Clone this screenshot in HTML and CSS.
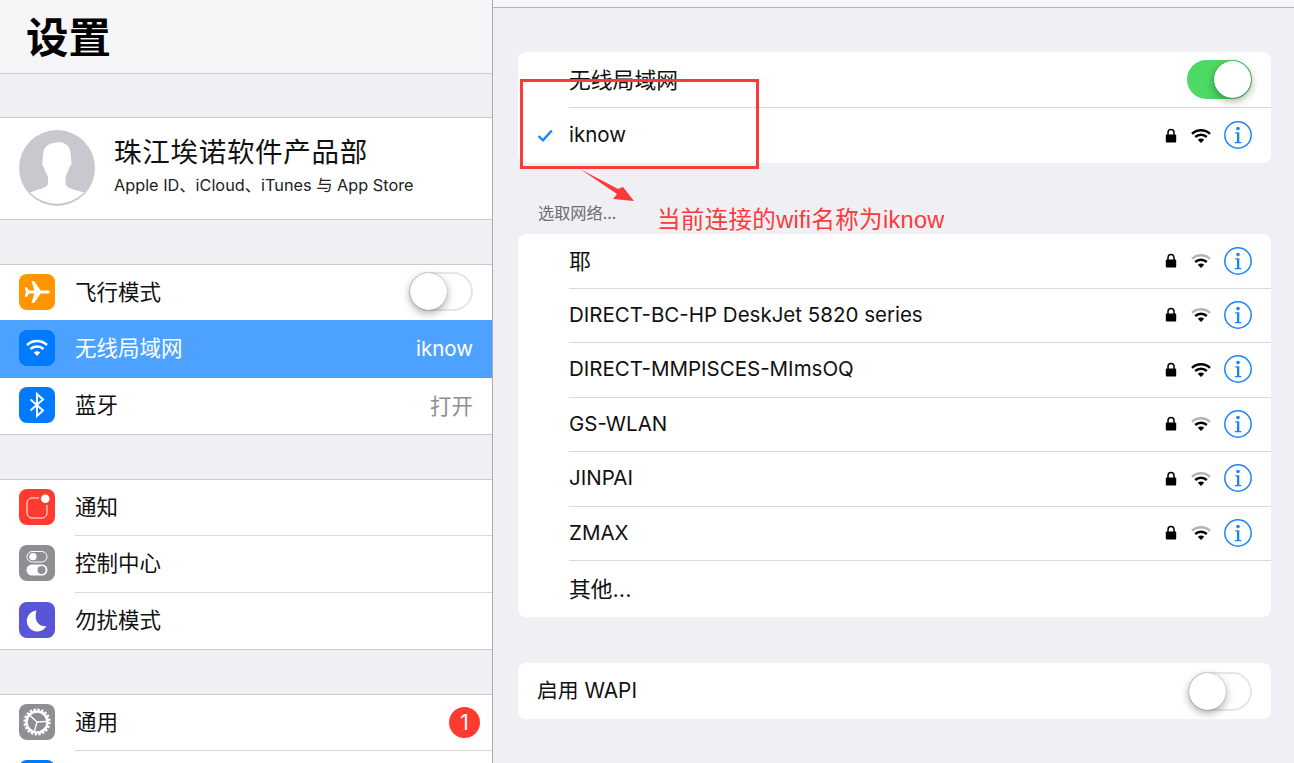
FILE: index.html
```html
<!DOCTYPE html>
<html lang="zh-CN">
<head>
<meta charset="utf-8">
<title>设置</title>
<link rel="stylesheet" href="styles.css">
</head>
<body>
<svg class="defs" width="0" height="0" aria-hidden="true">
  <defs>
    <symbol id="lock" viewBox="0 0 12 15">
      <path d="M3 7V4.600a3 3 0 0 1 6 0V7" fill="none" stroke="#000" stroke-width="1.500"/>
      <rect x="0.800" y="6.400" width="10.400" height="8" rx="1" fill="#000"/>
    </symbol>
    <symbol id="wifi-full" viewBox="0 0 20 15">
      <path d="M1 5.800a13 13 0 0 1 18 0" fill="none" stroke="#000" stroke-width="2.500"/>
      <path d="M4.200 9a8.400 8.400 0 0 1 11.600 0" fill="none" stroke="#000" stroke-width="2.500"/>
      <path d="M6.800 11.800a4.400 4.400 0 0 1 6.400 0L10 15Z" fill="#000"/>
    </symbol>
    <symbol id="wifi-weak" viewBox="0 0 20 15">
      <path d="M1 5.800a13 13 0 0 1 18 0" fill="none" stroke="#b4b4b4" stroke-width="2.500"/>
      <path d="M4.200 9a8.400 8.400 0 0 1 11.600 0" fill="none" stroke="#000" stroke-width="2.500"/>
      <path d="M6.800 11.800a4.400 4.400 0 0 1 6.400 0L10 15Z" fill="#000"/>
    </symbol>
    <symbol id="info" viewBox="0 0 28 28">
      <circle cx="14" cy="14" r="13.200" fill="none" stroke="#1a84ff" stroke-width="1.500"/>
      <circle cx="14" cy="7.600" r="1.800" fill="#1a84ff"/>
      <path d="M11.200 11.200h4.100v9.800h2v1.200h-6.400V21h2.100v-8.600h-1.800Z" fill="#1a84ff"/>
    </symbol>
  </defs>
</svg>

<div class="app">
  <aside class="side">
    <header class="side-head"><h1 class="side-title">设置</h1></header>

    <section class="group profile">
      <svg class="avatar" viewBox="0 0 76 76">
        <circle cx="38" cy="38" r="38" fill="#c8c8cd"/>
        <path d="M38.500 12.500c-9.500 0-14.500 5-14.500 13 0 3-.8 5.500-.8 8.500 0 2 1.300 2.500 1.800 3.500.8 3 2 6 4 9v7c-.5 3-4 4.500-8 5.500l-10 3.500a38 38 0 0 0 54 0L54.500 59.500c-4-1.500-8-3-8-6.500v-7c2-3 3.200-6 4-9 .4-1.500 2-1.500 2-3.500 0-3-.8-5.500-.8-8.500 0-8-4.200-13-13.200-13Z" fill="#fff"/>
      </svg>
      <div class="profile-text">
        <div class="profile-name">珠江埃诺软件产品部</div>
        <div class="profile-sub">Apple ID、iCloud、iTunes 与 App Store</div>
      </div>
    </section>

    <section class="group">
      <div class="item item-short">
        <span class="tile tile-orange">
          <svg viewBox="0 0 36 36" width="36" height="36"><path d="M31 18c0-1-1.500-1.600-3-1.600h-6.400L15.200 7h-2.800l3 9.400H10L7.800 13.300H5.600l1.400 4.700-1.400 4.700h2.200L10 19.600h5.400l-3 9.400h2.800l6.400-9.400H28c1.500 0 3-.6 3-1.600Z" fill="#fff"/></svg>
        </span>
        <span class="item-label">飞行模式</span>
        <span class="switch"><span class="knob"></span></span>
      </div>
      <div class="item item-active">
        <span class="tile tile-blue">
          <svg viewBox="0 0 36 36" width="36" height="36"><path d="M8 15a14.500 14.500 0 0 1 20 0M11.500 19a9.500 9.500 0 0 1 13 0" fill="none" stroke="#fff" stroke-width="2.600"/><path d="M14.800 22.600a5 5 0 0 1 6.400 0L18 26Z" fill="#fff"/></svg>
        </span>
        <span class="item-label">无线局域网</span>
        <span class="item-value">iknow</span>
      </div>
      <div class="item">
        <span class="tile tile-blue">
          <svg viewBox="0 0 36 36" width="36" height="36"><path d="M11.500 12.500 24 23.500 18 29V7l6 5.500-12.500 11" fill="none" stroke="#fff" stroke-width="2"/></svg>
        </span>
        <span class="item-label">蓝牙</span>
        <span class="item-value item-value-gray">打开</span>
      </div>
    </section>

    <section class="group">
      <div class="item">
        <span class="tile tile-red">
          <svg viewBox="0 0 36 36" width="36" height="36"><path d="M20 9h-7a5 5 0 0 0-5 5v10a5 5 0 0 0 5 5h10a5 5 0 0 0 5-5v-8" fill="none" stroke="#fff" stroke-width="1"/><circle cx="26.300" cy="9.700" r="4.300" fill="#fff"/></svg>
        </span>
        <span class="item-label">通知</span>
      </div>
      <div class="item">
        <span class="tile tile-gray">
          <svg viewBox="0 0 36 36" width="36" height="36"><rect x="8" y="6.500" width="20" height="10.500" rx="5.250" fill="none" stroke="#fff" stroke-width="1"/><circle cx="14" cy="11.700" r="3.600" fill="#fff"/><rect x="7.500" y="19.500" width="21" height="11" rx="5.500" fill="#fff"/><circle cx="22.500" cy="25" r="4" fill="#8e8e93"/></svg>
        </span>
        <span class="item-label">控制中心</span>
      </div>
      <div class="item">
        <span class="tile tile-indigo">
          <svg viewBox="0 0 36 36" width="36" height="36"><path d="M17.500 8.500a10.500 10.500 0 1 0 10 15.500c-6 1.500-13.500-4-10-15.500Z" fill="#fff"/></svg>
        </span>
        <span class="item-label">勿扰模式</span>
      </div>
    </section>

    <section class="group">
      <div class="item">
        <span class="tile tile-gray">
          <svg viewBox="0 0 36 36" width="36" height="36"><circle cx="18" cy="18" r="10.500" fill="none" stroke="#fff" stroke-width="2.500"/><circle cx="18" cy="18" r="12.300" fill="none" stroke="#fff" stroke-width="2.600" stroke-dasharray="2.300 1.560"/><path d="M18 18 11 11.500M18 18l9.500-.5M18 18l-2.500 9" fill="none" stroke="#fff" stroke-width="1.300"/></svg>
        </span>
        <span class="item-label">通用</span>
        <span class="badge">1</span>
      </div>
      <div class="item">
        <span class="tile tile-blue"></span>
      </div>
    </section>
  </aside>

  <main class="main">
    <div class="main-top"></div>
    <div class="main-body">
      <section class="card">
        <div class="net net-head">
          <span class="net-check"></span>
          <span class="net-name net-cjk">无线局域网</span>
          <span class="switch switch-on"><span class="knob"></span></span>
        </div>
        <div class="net net-current">
          <span class="net-check">
            <svg viewBox="0 0 16 13" width="16" height="13"><path d="M1.500 7 6 11.300 14.800 1.500" fill="none" stroke="#1a84ff" stroke-width="2.400"/></svg>
          </span>
          <span class="net-name">iknow</span>
          <svg class="i-lock"><use href="#lock"/></svg>
          <svg class="i-wifi"><use href="#wifi-full"/></svg>
          <svg class="i-info"><use href="#info"/></svg>
        </div>
      </section>

      <div class="card-caption">选取网络...</div>

      <section class="card">
        <div class="net net-first"><span class="net-check"></span><span class="net-name net-cjk">耶</span><svg class="i-lock"><use href="#lock"/></svg><svg class="i-wifi"><use href="#wifi-weak"/></svg><svg class="i-info"><use href="#info"/></svg></div>
        <div class="net"><span class="net-check"></span><span class="net-name">DIRECT-BC-HP DeskJet 5820 series</span><svg class="i-lock"><use href="#lock"/></svg><svg class="i-wifi"><use href="#wifi-weak"/></svg><svg class="i-info"><use href="#info"/></svg></div>
        <div class="net"><span class="net-check"></span><span class="net-name">DIRECT-MMPISCES-MImsOQ</span><svg class="i-lock"><use href="#lock"/></svg><svg class="i-wifi"><use href="#wifi-full"/></svg><svg class="i-info"><use href="#info"/></svg></div>
        <div class="net"><span class="net-check"></span><span class="net-name">GS-WLAN</span><svg class="i-lock"><use href="#lock"/></svg><svg class="i-wifi"><use href="#wifi-weak"/></svg><svg class="i-info"><use href="#info"/></svg></div>
        <div class="net"><span class="net-check"></span><span class="net-name">JINPAI</span><svg class="i-lock"><use href="#lock"/></svg><svg class="i-wifi"><use href="#wifi-weak"/></svg><svg class="i-info"><use href="#info"/></svg></div>
        <div class="net"><span class="net-check"></span><span class="net-name">ZMAX</span><svg class="i-lock"><use href="#lock"/></svg><svg class="i-wifi"><use href="#wifi-weak"/></svg><svg class="i-info"><use href="#info"/></svg></div>
        <div class="net net-last"><span class="net-check"></span><span class="net-name net-cjk">其他...</span></div>
      </section>

      <section class="card card-wapi">
        <div class="net net-wapi">
          <span class="net-name net-wapi-name">启用 WAPI</span>
          <span class="switch"><span class="knob"></span></span>
        </div>
      </section>
    </div>
  </main>

  <div class="note-box"></div>
  <svg class="note-arrow" viewBox="0 0 60 36" width="60" height="36"><polygon points="2,1 40,21 45,19 56,33 35,31 39,26" fill="#fc3a3a"/></svg>
  <div class="note-text">当前连接的wifi名称为iknow</div>
</div>
</body>
</html>
```
FILE: styles.css
```css
* { box-sizing: border-box; }
html, body { margin: 0; padding: 0; height: 100%; overflow: hidden; }
body {
  background: #efeff4;
  color: #000;
  font-family: Inter, "Liberation Sans", "Noto Sans CJK SC", sans-serif;
}
.defs { position: absolute; }
.app { position: relative; display: flex; width: 1294px; height: 763px; overflow: hidden; }

.side { width: 493px; flex: none; height: 763px; border-right: 1px solid #a9a9ae; overflow: hidden; }
.side-head { height: 74px; background: #f6f6f8; border-bottom: 1px solid #c9c9ce; display: flex; align-items: center; padding-left: 26px; }
.side-title { margin: 0; font-size: 42.500px; line-height: 1; font-weight: 700; font-family: "Noto Sans CJK SC", sans-serif; position: relative; top: -1px; }

.group { background: #fff; border-top: 1px solid #c9c9ce; border-bottom: 1px solid #c9c9ce; margin-top: 44px; }
.side-head + .group { margin-top: 43px; }

.profile { height: 103px; display: flex; align-items: center; padding-left: 19px; gap: 20px; }
.avatar { width: 76px; height: 76px; flex: none; position: relative; top: -1px; }
.profile-text { display: flex; flex-direction: column; gap: 8px; position: relative; top: -5px; }
.profile-name { font-size: 27.500px; line-height: 34px; letter-spacing: .72px; font-family: "Noto Sans CJK SC", sans-serif; color: #111; margin-left: -1px; }
.profile-sub { font-size: 16.300px; line-height: 20px; color: #222; margin-left: -1px; }

.item { position: relative; height: 56.333px; display: flex; align-items: center; padding: 0 19px 2px; }
.item + .item::before { content: ""; position: absolute; left: 75px; right: 0; top: -1px; height: 1px; background: #d8d8dc; }
.item-short { height: 55px; }
.item-active { background: #4ea2ff; color: #fff; height: 58px; }
.item-active + .item { height: 56px; }
.item-active::before, .item-active + .item::before { display: none; }
.tile { width: 36px; height: 36px; border-radius: 8px; flex: none; display: block; overflow: hidden; }
.tile-orange { background: #ff9500; }
.tile-blue { background: #007aff; }
.tile-red { background: #ff3b30; }
.tile-gray { background: #8e8e93; }
.tile-indigo { background: #5856d6; }
.tile svg { display: block; }
.item-label { margin-left: 20px; margin-bottom: 2px; flex: 1; font-size: 21.500px; line-height: 28px; font-family: "Noto Sans CJK SC", sans-serif; color: #111; }
.item-active .item-label { color: #fff; }
.item-value { margin-top: 2px; font-size: 20.500px; line-height: 28px; color: #fff; }
.item-value-gray { margin-top: 0; color: #8e8e93; font-size: 21.500px; font-family: "Noto Sans CJK SC", sans-serif; }
.badge { width: 31px; height: 31px; border-radius: 50%; background: #ff3b30; color: #fff; font-size: 21px; line-height: 31px; text-align: center; margin-right: -7px; }

.switch { position: relative; width: 64px; height: 39px; flex: none; border-radius: 20px; background: #fff; border: 2px solid #e6e6e6; display: block; }
.knob { position: absolute; left: -1px; top: -1px; width: 37px; height: 37px; border-radius: 50%; background: #fff; box-shadow: 0 3px 8px rgba(0, 0, 0, .35), 0 0 1px rgba(0, 0, 0, .4); }
.switch-on { width: 65px; background: #4cd964; border-color: #4cd964; }
.switch-on .knob { left: auto; right: -1px; }

.main { flex: 1; min-width: 0; }
.main-top { height: 8px; background: #f6f6f8; border-bottom: 1px solid #b4b4b8; }
.main-body { padding: 44px 23px 0 25px; }
.card { background: #fff; border-radius: 8px; overflow: hidden; }
.card-caption { height: 71px; padding: 38px 0 0 20px; font-size: 16.200px; line-height: 22px; color: #6d6d72; font-family: "Noto Sans CJK SC", sans-serif; }
.card-wapi { margin-top: 46px; }

.net { position: relative; height: 54.500px; display: flex; align-items: center; padding-right: 19px; }
.net + .net::before { content: ""; position: absolute; left: 51px; right: 0; top: 0; height: 1px; background: #d8d8dc; }
.net-first { height: 53.600px; }
.net-head { height: 55px; }
.net-current { height: 56px; }
.net-current::before { background: #ececef; }
.net-last { height: 57px; }
.net-wapi { height: 56px; padding-left: 19px; }
.net-check { width: 51px; flex: none; padding-left: 19px; display: flex; align-items: center; }
.net-name { flex: 1; font-size: 20.500px; line-height: 28px; color: #111; font-family: Inter, "Noto Sans CJK SC", sans-serif; }
.net-cjk { font-size: 21.800px; }
.net-wapi-name { font-size: 20.800px; }
.i-lock { width: 12px; height: 15px; flex: none; }
.i-wifi { width: 20px; height: 15px; flex: none; margin-left: 14px; }
.i-info { width: 28px; height: 28px; flex: none; margin-left: 13px; }

.note-box { position: absolute; left: 520px; top: 79px; width: 239px; height: 90px; border: 3px solid #fc3a3a; }
.note-arrow { position: absolute; left: 578px; top: 168px; }
.note-text { position: absolute; left: 657px; top: 204px; font-size: 23.500px; line-height: 32px; letter-spacing: .33px; color: #fc3a3a; white-space: nowrap; font-family: "Liberation Sans", "Noto Sans CJK SC", sans-serif; }
```
